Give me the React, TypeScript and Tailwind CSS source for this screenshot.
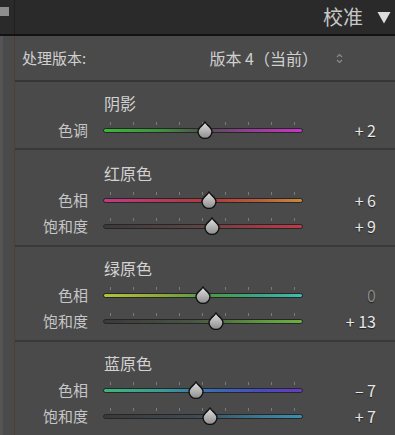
// Lightroom-style "校准" (Calibration) panel, dark theme.

type Row = {
  label: string;
  value: number;
  track: string;
};

type Section = {
  title: string;
  rows: Row[];
  box: string;
};

const sections: Section[] = [
  {
    title: "阴影",
    box: "h-[68px] pt-[12px]",
    rows: [
      {
        label: "色调",
        value: 2,
        track:
          "bg-[linear-gradient(90deg,#39b83a_0%,#3f8f3e_30%,#4f4f4f_50%,#8f3f90_72%,#c935c8_100%)]",
      },
    ],
  },
  {
    title: "红原色",
    box: "h-[97px] pt-[14px]",
    rows: [
      {
        label: "色相",
        value: 6,
        track:
          "bg-[linear-gradient(90deg,#c23a86_0%,#b23a52_35%,#b33b3b_55%,#b8603a_80%,#c98a3a_100%)]",
      },
      {
        label: "饱和度",
        value: 9,
        track:
          "bg-[linear-gradient(90deg,#3a3a3a_0%,#5a4444_45%,#9a3a44_75%,#bf3a4a_100%)]",
      },
    ],
  },
  {
    title: "绿原色",
    box: "h-[95px] pt-[12px]",
    rows: [
      {
        label: "色相",
        value: 0,
        track:
          "bg-[linear-gradient(90deg,#b4c23a_0%,#8aa83a_30%,#4a9a4a_55%,#3aa888_80%,#3ac0b0_100%)]",
      },
      {
        label: "饱和度",
        value: 13,
        track:
          "bg-[linear-gradient(90deg,#3a3a3a_0%,#4a5444_45%,#5e9a3e_80%,#6ab03e_100%)]",
      },
    ],
  },
  {
    title: "蓝原色",
    box: "h-[95px] pt-[12px]",
    rows: [
      {
        label: "色相",
        value: -7,
        track:
          "bg-[linear-gradient(90deg,#3ab878_0%,#3a9a98_30%,#3a6ab8_55%,#4a4ac0_80%,#6a3ac8_100%)]",
      },
      {
        label: "饱和度",
        value: 7,
        track:
          "bg-[linear-gradient(90deg,#3a3a3a_0%,#3e4a52_45%,#3a7a98_80%,#3a90b0_100%)]",
      },
    ],
  },
];

const ticks = [0, 1, 2, 3, 4, 5, 6, 7, 8];

function fmt(v: number) {
  if (v === 0) return "0";
  return v > 0 ? `+ ${v}` : `– ${Math.abs(v)}`;
}

function Thumb() {
  return (
    <svg width="16" height="18" viewBox="0 0 16 18">
      <defs>
        <linearGradient id="thumbFill" x1="0" y1="0" x2="0" y2="1">
          <stop offset="0" stopColor="#e2e2e2" />
          <stop offset="1" stopColor="#8c8c8c" />
        </linearGradient>
      </defs>
      <path
        d="M8 1 C10 4.5 15 6.5 15 10.5 A7 7 0 0 1 1 10.5 C1 6.5 6 4.5 8 1 Z"
        fill="url(#thumbFill)"
        stroke="#111"
        strokeWidth="1.4"
      />
    </svg>
  );
}

function Slider({ row }: { row: Row }) {
  return (
    <div className="flex h-[26px] items-center">
      <div className="w-[73px] text-right text-[15px] text-[#c6c6c6]">{row.label}</div>
      <div className="relative ml-[15px] h-[26px] w-[200px]">
        {ticks.map((i) => (
          <span
            key={i}
            className="absolute top-[5px] h-[3px] w-px bg-[#7a7a7a]"
            style={{ left: 7 + i * 23 }}
          />
        ))}
        <div
          className={`absolute left-0 right-0 top-[11px] h-[5px] rounded-full border border-[#262626] ${row.track}`}
        />
        <div
          className="absolute top-[4px]"
          style={{ left: 100 + row.value - 8 }}
        >
          <Thumb />
        </div>
      </div>
      <div
        className={`flex-1 pr-[19px] text-right text-[16px] [text-shadow:0_1px_1px_#222] ${
          row.value === 0 ? "text-[#8a8a8a]" : "text-[#e8e8e8]"
        }`}
      >
        {fmt(row.value)}
      </div>
    </div>
  );
}

export default function App() {
  return (
    <div className="h-[435px] w-[395px] overflow-hidden bg-[#4a4a4a] font-['Noto_Sans_CJK_SC','Noto_Sans',sans-serif]">
      <header className="flex h-[34px] items-center justify-between bg-[#2a2a2a]">
        <div className="flex h-full">
          <span className="mt-[7px] h-[9px] w-[9px] bg-[#8e8e8e]" />
          <span className="ml-[5px] h-full w-px bg-[#1f1f1f]" />
        </div>
        <div className="flex items-center gap-[14px] pr-[4px]">
          <span className="text-[20px] leading-none text-[#c8c8c8]">校准</span>
          <svg width="14" height="13" viewBox="0 0 14 13">
            <path d="M0.5 1 L13.5 1 L7 12.5 Z" fill="#dcdcdc" />
          </svg>
        </div>
      </header>
      <div className="h-[2px] bg-[#121212]" />
      <div className="flex">
        <div className="w-[15px] shrink-0 border-l-[3px] border-r border-l-[#555555] border-r-[#4e4036] bg-[#4a4a4a]" />
        <div className="flex-1">
          <div className="flex h-[46px] items-center border-b-2 border-[#363636] text-[14px] text-[#d0d0d0]">
            <span className="pl-[7px] text-[15px]">处理版本:</span>
            <span className="ml-auto text-[16px]">版本 4（当前）</span>
            <svg className="ml-[18px] mr-[52px]" width="7" height="11" viewBox="0 0 7 11">
              <path d="M1 4 L3.5 1.5 L6 4 M1 7 L3.5 9.5 L6 7" fill="none" stroke="#8a8a8a" strokeWidth="1.2" />
            </svg>
          </div>
          {sections.map((s) => (
            <section key={s.title} className={`${s.box} border-b-2 border-[#393939]`}>
              <div className="h-[18px] pl-[89px] text-[16px] leading-[18px] text-[#d2d2d2]">
                {s.title}
              </div>
              <div className="mt-[5px] flex flex-col">
                {s.rows.map((r) => (
                  <Slider key={r.label} row={r} />
                ))}
              </div>
            </section>
          ))}
        </div>
      </div>
    </div>
  );
}
